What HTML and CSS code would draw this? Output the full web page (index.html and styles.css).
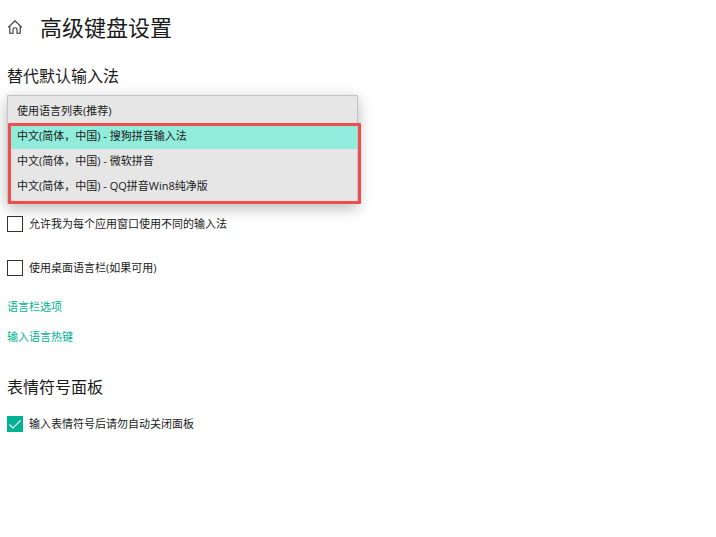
FILE: index.html
```html
<!DOCTYPE html>
<html lang="zh-CN">

<head>
    <meta charset="UTF-8">
    <meta name="viewport" content="width=device-width, initial-scale=1.0">
    <title>高级键盘设置</title>
    <link rel="stylesheet" href="styles.css">
</head>

<body>

    <header class="page-header">
        <a class="home" href="#" aria-label="主页">
            <svg width="16" height="16" viewBox="0 0 16 16" fill="none" stroke="#333" stroke-width="1.1">
                <path d="M1.2 8.4 L8 1.8 L14.8 8.4" />
                <path d="M2.8 7 V14.2 H6 V10.6 Q6 8.8 8 8.8 Q10 8.8 10 10.6 V14.2 H13.2 V7" />
            </svg>
        </a>
        <h1>高级键盘设置</h1>
    </header>

    <main>
        <section class="input-method">
            <h2><label for="inputMethod">替代默认输入法</label></h2>

            <div class="dropdown">
                <select id="inputMethod" name="inputMethod" size="4">
                    <option value="default">使用语言列表(推荐)</option>
                    <option value="sogou" selected>中文(简体，中国) - 搜狗拼音输入法</option>
                    <option value="microsoft">中文(简体，中国) - 微软拼音</option>
                    <option value="qq">中文(简体，中国) - QQ拼音Win8纯净版</option>
                </select>
                <div class="highlight"></div>
            </div>

            <div class="check">
                <input type="checkbox" id="perWindow" name="perWindow">
                <label for="perWindow">允许我为每个应用窗口使用不同的输入法</label>
            </div>
            <div class="check">
                <input type="checkbox" id="languageBar" name="languageBar">
                <label for="languageBar">使用桌面语言栏(如果可用)</label>
            </div>

            <nav class="links">
                <a href="#">语言栏选项</a>
                <a href="#">输入语言热键</a>
            </nav>
        </section>

        <section class="emoji">
            <h2>表情符号面板</h2>
            <div class="check">
                <input type="checkbox" id="emojiPanel" name="emojiPanel" checked>
                <label for="emojiPanel">输入表情符号后请勿自动关闭面板</label>
            </div>
        </section>
    </main>

</body>

</html>
```
FILE: styles.css
```css
body {
    margin: 0;
    padding: 11px 7px;
    background-color: #fff;
    color: #1a1a1a;
    font-family: "Open Sans", "Noto Sans CJK SC", sans-serif;
    font-size: 11px;
    line-height: 16px;
}

.page-header {
    display: flex;
    align-items: center;
    gap: 17px;
    margin-bottom: 21px;
}

.home {
    display: flex;
}

h1 {
    margin: 0;
    font-size: 22px;
    font-weight: 400;
    line-height: 32px;
}

h2 {
    margin: 0;
    font-size: 16px;
    font-weight: 400;
    line-height: 24px;
}

.dropdown {
    position: relative;
    max-width: 351px;
    margin-top: 7px;
    margin-bottom: 12px;
}

select {
    display: block;
    width: 100%;
    height: 109px;
    box-sizing: border-box;
    padding: 3px 0 4px;
    border: 1px solid #c4c4c4;
    border-radius: 0;
    outline: none;
    overflow: hidden;
    background-color: #e6e6e6;
    box-shadow: 0 4px 14px rgba(0, 0, 0, 0.28);
    color: #1a1a1a;
    font-family: inherit;
    font-size: 11px;
}

option {
    height: 25px;
    min-height: 25px;
    box-sizing: border-box;
    padding: 3px 9px 0;
}

option:checked {
    background: linear-gradient(#91ecdc, #91ecdc);
    color: #1a1a1a;
}

/* red frame around the installed input methods */
.highlight {
    position: absolute;
    top: 28px;
    right: -3px;
    bottom: 0;
    left: 1px;
    border: 3px solid #ef4e4e;
    border-radius: 1px;
    pointer-events: none;
}

.check {
    display: flex;
    align-items: center;
    gap: 6px;
    margin-bottom: 28px;
}

input[type="checkbox"] {
    appearance: none;
    width: 16px;
    height: 16px;
    margin: 0;
    border: 1px solid #333;
    background-color: #fff;
}

input[type="checkbox"]:checked {
    border-color: #00b294;
    background: #00b294 url("data:image/svg+xml,%3Csvg xmlns='http://www.w3.org/2000/svg' viewBox='0 0 14 14'%3E%3Cpath d='M1.5 7.5 L5 11 L12.5 3.5' fill='none' stroke='white' stroke-width='1.2'/%3E%3C/svg%3E") center / 14px 14px no-repeat;
}

.links {
    display: flex;
    flex-direction: column;
    align-items: flex-start;
    gap: 14px;
    margin-top: -5px;
}

.links a {
    color: #00b294;
    text-decoration: none;
}

.emoji {
    margin-top: 30px;
}

.emoji .check {
    margin-top: 17px;
}
```
